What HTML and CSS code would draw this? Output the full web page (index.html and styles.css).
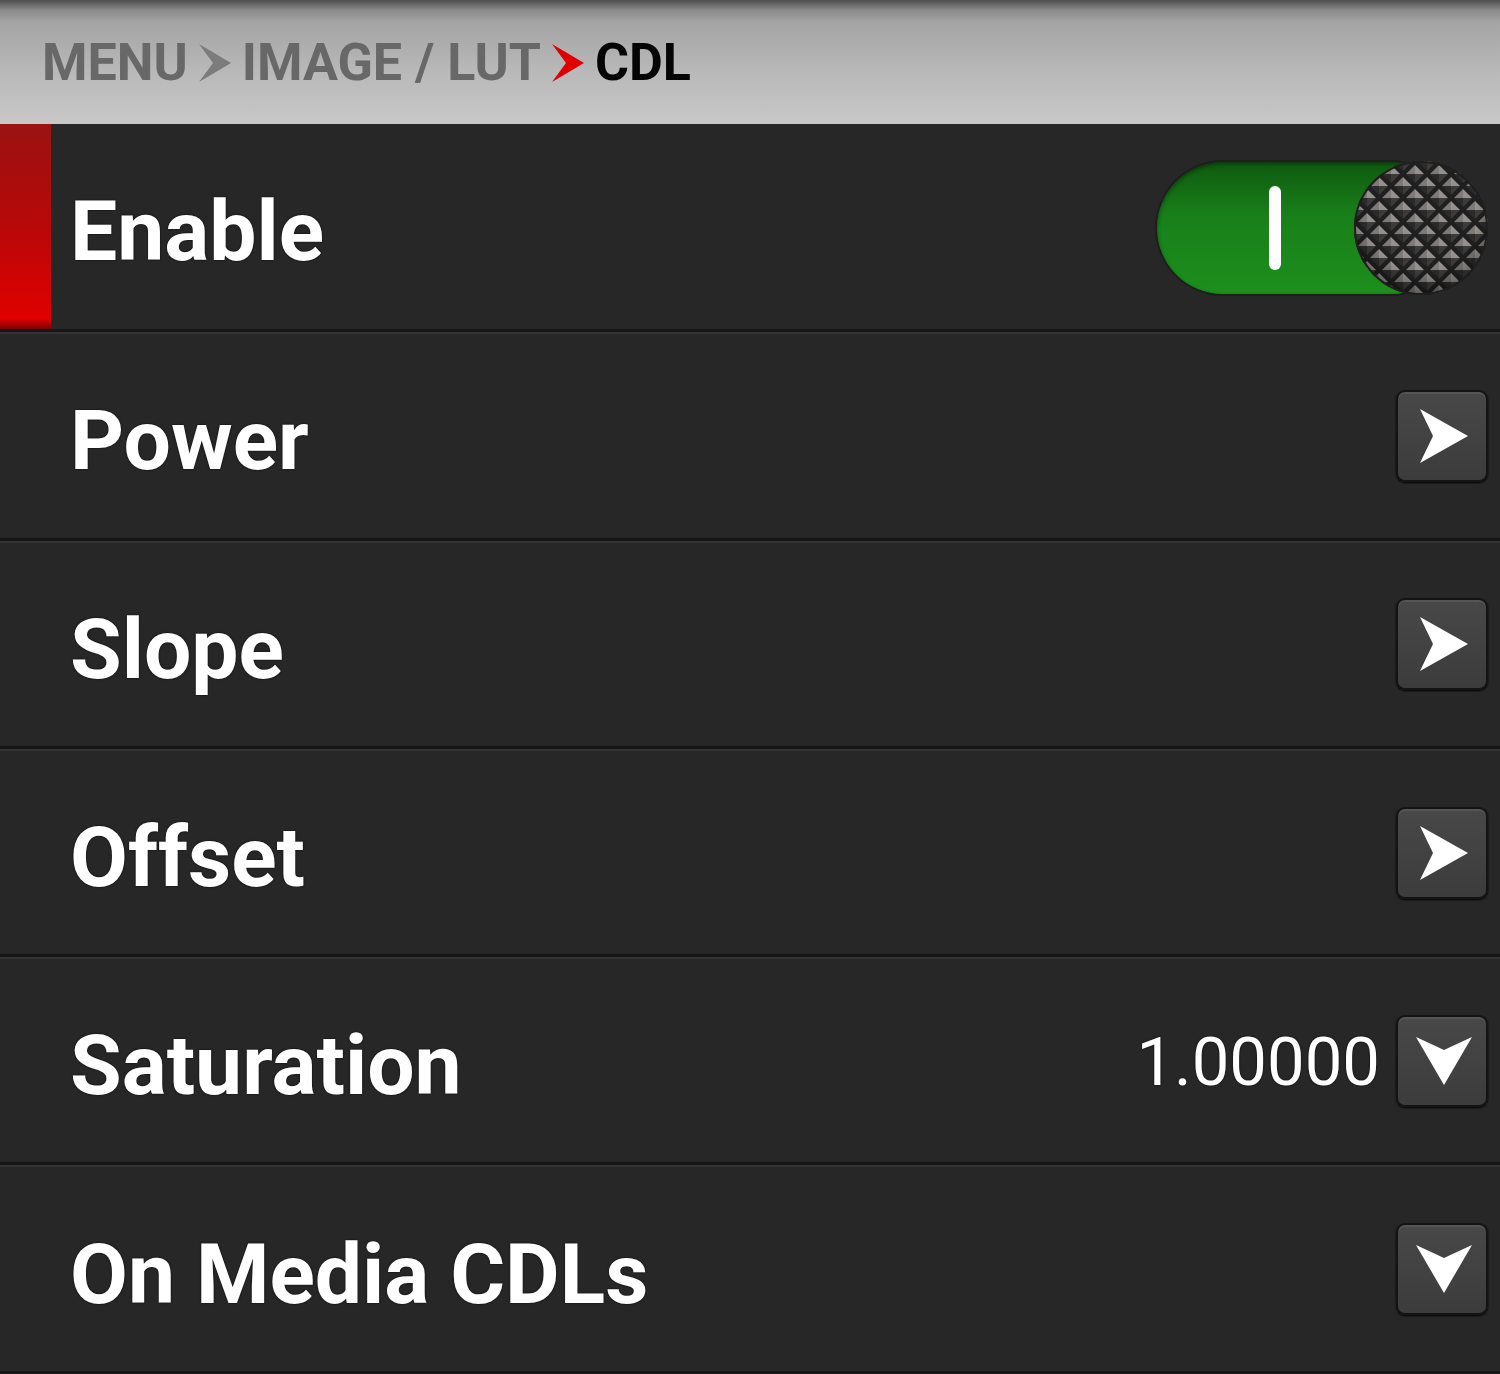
FILE: index.html
```html
<!DOCTYPE html>
<html>
<head>
<meta charset="utf-8">
<link rel="stylesheet" href="styles.css">
</head>
<body>
<div class="screen">
  <header class="crumbs">
    <span class="crumb">MENU</span>
    <svg class="sep" width="34" height="38" viewBox="0 0 34 38"><path d="M1 0 L33 19 L1 38 L15 19 Z" fill="#7c7c7c"/></svg>
    <span class="crumb">IMAGE / LUT</span>
    <svg class="sep" width="34" height="38" viewBox="0 0 34 38"><path d="M1 0 L33 19 L1 38 L15 19 Z" fill="#e00000"/></svg>
    <span class="crumb current">CDL</span>
  </header>
  <div class="row selected">
    <div class="marker"></div>
    <span class="label">Enable</span>
    <div class="toggle">
      <div class="track"><div class="bar"></div></div>
      <div class="knob">
        <svg width="136" height="136" viewBox="0 0 136 136">
          <defs>
            <pattern id="dia" x="2" y="2" width="24" height="24" patternUnits="userSpaceOnUse">
              <rect width="24" height="24" fill="#1f1f1f"/>
              <g id="pyr">
                <path d="M12 3 L12 12 L3 12 Z" fill="#7d7a77"/>
                <path d="M12 3 L21 12 L12 12 Z" fill="#95918d"/>
                <path d="M21 12 L12 21 L12 12 Z" fill="#3c3b3a"/>
                <path d="M3 12 L12 21 L12 12 Z" fill="#2c2b2b"/>
              </g>
              <use href="#pyr" x="-12" y="-12"/>
              <use href="#pyr" x="12" y="-12"/>
              <use href="#pyr" x="-12" y="12"/>
              <use href="#pyr" x="12" y="12"/>
            </pattern>
            <radialGradient id="shade" cx="50%" cy="40%" r="60%">
              <stop offset="70%" stop-color="#000" stop-opacity="0"/>
              <stop offset="100%" stop-color="#000" stop-opacity="0.35"/>
            </radialGradient>
          </defs>
          <circle cx="68" cy="68" r="67" fill="url(#dia)"/>
          <circle cx="68" cy="68" r="67" fill="url(#shade)"/>
          <circle cx="68" cy="68" r="66" fill="none" stroke="#1e1e1e" stroke-width="2"/>
        </svg>
      </div>
    </div>
  </div>
  <div class="row">
    <span class="label">Power</span>
    <div class="btn"><svg width="50" height="56" viewBox="0 0 50 56"><path d="M1 1 L49 28 L1 55 L14 28 Z" fill="#fff"/></svg></div>
  </div>
  <div class="row">
    <span class="label">Slope</span>
    <div class="btn"><svg width="50" height="56" viewBox="0 0 50 56"><path d="M1 1 L49 28 L1 55 L14 28 Z" fill="#fff"/></svg></div>
  </div>
  <div class="row">
    <span class="label">Offset</span>
    <div class="btn"><svg width="50" height="56" viewBox="0 0 50 56"><path d="M1 1 L49 28 L1 55 L14 28 Z" fill="#fff"/></svg></div>
  </div>
  <div class="row">
    <span class="label">Saturation</span>
    <span class="value">1.00000</span>
    <div class="btn"><svg width="58" height="50" viewBox="0 0 58 50"><path d="M1 1 L29 49 L57 1 L29 14 Z" fill="#fff"/></svg></div>
  </div>
  <div class="row">
    <span class="label">On Media CDLs</span>
    <div class="btn"><svg width="58" height="50" viewBox="0 0 58 50"><path d="M1 1 L29 49 L57 1 L29 14 Z" fill="#fff"/></svg></div>
  </div>
</div>
</body>
</html>
```
FILE: styles.css
```css
* { box-sizing: border-box; }
html, body { margin: 0; padding: 0; }
body { background: #262626; font-family: Roboto, "Liberation Sans", sans-serif; }
.screen { width: 1500px; height: 1374px; overflow: hidden; display: flex; flex-direction: column; }
.crumbs {
  height: 124px;
  flex: none;
  display: flex;
  align-items: center;
  padding-left: 42px;
  padding-top: 2px;
  background: linear-gradient(#4e4e4e 0px, #8a8a8a 10px, #a4a4a4 22px, #b8b8b8 70px, #c8c8c8 124px);
}
.crumb {
  font-weight: 700;
  font-size: 52px;
  color: #686868;
  letter-spacing: 0;
  line-height: 1;
}
.crumb.current { color: #050505; }
.sep { flex: none; margin: 0 10px 0 10px; }
.row {
  position: relative;
  height: 208.3px;
  flex: none;
  display: flex;
  align-items: center;
  padding-left: 70px;
  padding-right: 12px;
  background: #272727;
  border-top: 2px solid #333;
  border-bottom: 3px solid #161616;
}
.row.selected { border-top: 0; }
.marker {
  position: absolute;
  left: 0; top: 0; bottom: 0;
  width: 51px;
  background: linear-gradient(#9a1212 0%, #b80808 50%, #e00000 95%, #7a0000 100%);
}
.label {
  font-weight: 700;
  font-size: 84px;
  color: #fff;
  letter-spacing: 0;
  text-shadow: 0 0 2px #000;
  padding-top: 10px;
  flex: 1;
}
.value {
  font-size: 67px;
  color: #fff;
  margin-right: 16px;
  padding-top: 2px;
  text-shadow: 0 0 2px #000;
}
.btn {
  width: 92px;
  height: 92px;
  border-radius: 9px;
  background: linear-gradient(#484848, #3c3c3c);
  border: 2px solid #141414;
  box-shadow: inset 0 2px 0 #555, 0 1px 2px #000;
  display: flex;
  align-items: center;
  justify-content: center;
}
.btn svg { margin-left: 4px; }
.toggle { position: relative; width: 332px; height: 136px; margin-right: -1px; margin-top: 2px; }
.track {
  position: absolute;
  left: 0; top: 2px;
  width: 300px; height: 132px;
  border-radius: 66px;
  background: linear-gradient(#0f5a0f, #197f19 40%, #1c8f1c);
  box-shadow: 0 0 0 2px #1e1e1e, inset 0 2px 4px rgba(0,0,0,0.4);
}
.bar {
  position: absolute;
  left: 112px; top: 24px;
  width: 12px; height: 84px;
  border-radius: 6px;
  background: #fff;
}
.knob { position: absolute; right: 0; top: 0; width: 136px; height: 136px; border-radius: 50%; }
.knob svg { display: block; }
```
